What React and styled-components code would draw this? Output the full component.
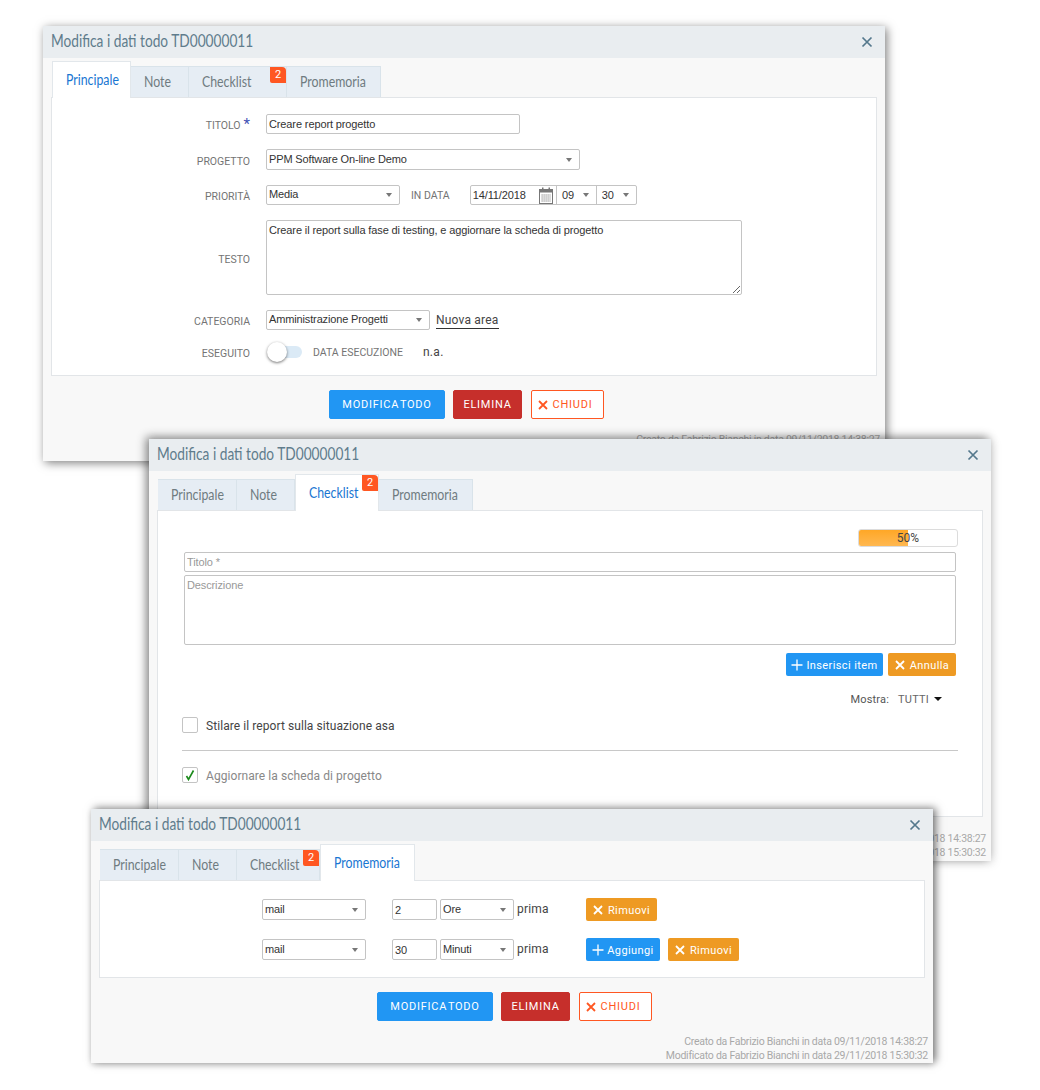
import React from "react";
import styled, { createGlobalStyle } from "styled-components";

const GlobalStyle = createGlobalStyle`
  html, body {
    margin: 0;
    background: #fff;
  }
`;

const Desktop = styled.div`
  position: relative;
  width: 1040px;
  height: 1090px;
  overflow: hidden;
  font-family: "Liberation Sans", Arial, sans-serif;
`;

const Win = styled.section`
  position: absolute;
  left: ${props => props.$x}px;
  top: ${props => props.$y}px;
  width: 842px;
  height: ${props => props.$h}px;
  background: #f8f8f8;
  box-shadow: ${props => props.$shadow};
  display: flex;
  flex-direction: column;
`;

const WinHeader = styled.header`
  height: 32px;
  flex: none;
  background: #e9edf0;
  display: flex;
  align-items: center;
  justify-content: space-between;
  padding: 0 12px 0 8px;
`;

const WinTitle = styled.h2`
  margin: 0 0 2px;
  font: 400 16.5px "Lato", sans-serif;
  color: #5f7c8c;
  white-space: nowrap;
  transform: scaleX(0.83);
  transform-origin: left center;
`;

const CloseIcon = styled.svg`
  width: 12px;
  height: 12px;
  stroke: #54788c;
  stroke-width: 1.7;
  fill: none;
`;

const WinBody = styled.div`
  padding: 3px 8px 0;
  display: flex;
  flex-direction: column;
  flex: 1;
`;

const TabBar = styled.div`
  display: flex;
  align-items: flex-end;
  height: 37px;
  padding-left: 1px;
  margin-bottom: -1px;
  position: relative;
`;

const Tab = styled.div`
  position: relative;
  box-sizing: border-box;
  width: ${props => props.$w}px;
  height: ${props => (props.$active ? 37 : 31)}px;
  margin-bottom: ${props => (props.$active ? 0 : 1)}px;
  padding: ${props => (props.$active ? "9px" : "6px")} 0 0 13px;
  font: 400 14.5px "Lato", sans-serif;
  background: ${props => (props.$active ? "#fff" : "#e6edf4")};
  color: ${props => (props.$active ? "#1976d2" : "#6f7b80")};
  border: 1px solid ${props => (props.$active ? "#e2e7eb" : "#d9e3ea")};
  border-left-width: ${props => (props.$active ? 1 : 0)}px;
  border-bottom: 0;
  z-index: ${props => (props.$active ? 1 : 0)};
`;

const TabLabel = styled.span`
  display: inline-block;
  transform: scaleX(0.85);
  transform-origin: left center;
`;

const Badge = styled.span`
  position: absolute;
  top: 0;
  right: 0;
  width: 16px;
  height: 16px;
  background: #ff5722;
  border-top-right-radius: 4px;
  border-bottom-left-radius: 2px;
  color: #fff;
  font: 400 11px/16px "Roboto", sans-serif;
  text-align: center;
`;

const Panel = styled.div`
  background: #fff;
  border: 1px solid #e2e5e8;
`;

const FormPanel = styled(Panel)`
  height: 279px;
  box-sizing: border-box;
  padding-top: 16px;
  display: grid;
  grid-template-columns: 198px 1fr;
  column-gap: 16px;
  row-gap: 15px;
  grid-auto-rows: min-content;
`;

const Label = styled.label`
  justify-self: end;
  align-self: center;
  padding-top: 3px;
  margin: ${props => props.$m || 0};
  font: 400 10.5px "Roboto", sans-serif;
  color: #747474;
  text-transform: uppercase;
  white-space: nowrap;
`;

const Star = styled.span`
  color: #3f51b5;
  font-size: 15px;
  line-height: 10px;
  margin-left: 3px;
`;

const Line = styled.div`
  display: flex;
  align-items: center;
  min-height: 20px;
`;

const ToggleLine = styled(Line)`
  margin-top: -3px;
`;

const TextField = styled.input`
  box-sizing: border-box;
  width: ${props => props.$w};
  height: ${props => props.$h || 20}px;
  padding: 0 2px;
  border: 1px solid #c4c4c4;
  border-radius: 2px;
  font: 400 11px "Liberation Sans", Arial, sans-serif;
  letter-spacing: -0.12px;
  color: #333;
  background: #fff;
  outline: 0;

  &::placeholder {
    color: #999;
    opacity: 1;
  }
`;

const TextBox = styled.textarea`
  display: block;
  box-sizing: border-box;
  width: ${props => props.$w};
  height: ${props => props.$h}px;
  padding: 3px 2px;
  margin: ${props => props.$m || 0};
  border: 1px solid #c4c4c4;
  border-radius: 2px;
  font: 400 11px "Liberation Sans", Arial, sans-serif;
  letter-spacing: -0.12px;
  color: #333;
  background: #fff;
  outline: 0;
  resize: ${props => (props.$fixed ? "none" : "both")};

  &::placeholder {
    color: #999;
    opacity: 1;
  }
`;

const SelectBox = styled.div`
  box-sizing: border-box;
  width: ${props => props.$w}px;
  height: ${props => props.$h || 20}px;
  flex: none;
  display: flex;
  align-items: center;
  justify-content: space-between;
  padding: 0 7px 2px 2px;
  border: 1px solid #c4c4c4;
  border-radius: 2px;
  background: #fff;
  font: 400 11px "Liberation Sans", Arial, sans-serif;
  letter-spacing: -0.14px;
  color: #333;

  &::after {
    content: "";
    margin-top: 2px;
    border-left: 3.5px solid transparent;
    border-right: 3.5px solid transparent;
    border-top: 4px solid #777;
  }
`;

const InlineLabel = styled.span`
  font: 400 10.5px "Roboto", sans-serif;
  color: #747474;
  text-transform: uppercase;
  margin: ${props => props.$m};
  white-space: nowrap;
`;

const DateGroup = styled.div`
  box-sizing: border-box;
  width: 167px;
  height: 20px;
  display: flex;
  border: 1px solid #c4c4c4;
  border-radius: 2px;
  font: 400 11px "Liberation Sans", Arial, sans-serif;
  letter-spacing: -0.1px;
  color: #333;
`;

const DateInput = styled.div`
  width: 86px;
  display: flex;
  align-items: center;
  justify-content: space-between;
  padding: 0 3px 0 2px;
  box-sizing: border-box;
`;

const TimePart = styled.div`
  box-sizing: border-box;
  width: 40px;
  display: flex;
  align-items: center;
  justify-content: space-between;
  padding: 0 7px 0 5px;
  border-left: 1px solid #c4c4c4;

  &::after {
    content: "";
    border-left: 3.5px solid transparent;
    border-right: 3.5px solid transparent;
    border-top: 4px solid #777;
  }
`;

const LinkText = styled.a`
  margin: 1px 0 0 6px;
  padding-bottom: 1px;
  border-bottom: 1px solid #333;
  font: 400 12px "Roboto", sans-serif;
  letter-spacing: 0.2px;
  color: #444;
`;

const Toggle = styled.div`
  position: relative;
  width: 36px;
  height: 20px;
  margin-left: 1px;
  flex: none;

  &::before {
    content: "";
    position: absolute;
    left: 10px;
    right: 1px;
    top: 4px;
    height: 12px;
    border-radius: 6px;
    background: #dbeaf6;
  }

  &::after {
    content: "";
    position: absolute;
    left: 0;
    top: 0;
    width: 20px;
    height: 20px;
    border-radius: 50%;
    background: #fff;
    box-shadow: 0 1px 3px rgba(0, 0, 0, 0.55);
  }
`;

const PlainValue = styled.span`
  font: 400 12px "Roboto", sans-serif;
  letter-spacing: 0.3px;
  color: #444;
`;

const Actions = styled.div`
  display: flex;
  justify-content: center;
  padding-left: 5px;
  margin-top: 14px;
`;

const BigButton = styled.button`
  box-sizing: border-box;
  height: 29px;
  width: ${props => props.$w}px;
  margin-left: ${props => props.$ml || 0}px;
  padding: 0 ${props => props.$pr || 0}px 0 0;
  border: 1px solid ${props => props.$border || props.$bg};
  border-radius: 2px;
  background: ${props => props.$bg};
  color: ${props => props.$color || "#fff"};
  font: 400 11px "Roboto", sans-serif;
  letter-spacing: 0.75px;
  word-spacing: -2.5px;
  display: flex;
  align-items: center;
  justify-content: center;
  gap: 3px;
`;

const SmallButton = styled.button`
  box-sizing: border-box;
  height: 23px;
  width: ${props => props.$w}px;
  margin-left: ${props => props.$ml || 0}px;
  padding: 1px 0 0;
  flex: none;
  border: 0;
  border-radius: 2px;
  background: ${props => props.$bg};
  color: #fff;
  font: 400 11px "Roboto", sans-serif;
  letter-spacing: 0.4px;
  display: flex;
  align-items: center;
  justify-content: center;
  gap: 3px;
`;

const Audit = styled.footer`
  margin: ${props => props.$mt}px -3px 0 0;
  text-align: right;
  font: 400 10.5px/14px "Roboto", sans-serif;
  letter-spacing: -0.26px;
  color: #a8a8a8;
`;

const ChecklistPanel = styled(Panel)`
  padding: 18px 26px 34px;
  height: 307px;
  box-sizing: border-box;
`;

const ProgressBar = styled.div`
  position: relative;
  box-sizing: border-box;
  width: 100px;
  height: 18px;
  margin: 0 -2px 5px auto;
  border: 1px solid #dcdcdc;
  border-radius: 3px;
  overflow: hidden;
  text-align: center;
  font: 400 12px/17px "Roboto", sans-serif;
  color: #444;
`;

const ProgressFill = styled.div`
  position: absolute;
  inset: 0 auto 0 0;
  background: linear-gradient(#ffa726, #ffb851);
`;

const ProgressText = styled.span`
  position: relative;
`;

const ItemButtons = styled.div`
  display: flex;
  justify-content: flex-end;
  margin-top: 8px;
`;

const ShowFilter = styled.div`
  display: flex;
  justify-content: flex-end;
  align-items: center;
  height: 16px;
  margin: 15px 14px 10px 0;
  font: 400 11px "Roboto", sans-serif;
  letter-spacing: 0.2px;
  color: #555;
`;

const FilterValue = styled.span`
  margin-left: 9px;
  color: #666;

  &::after {
    content: "";
    display: inline-block;
    margin: 0 0 1px 5px;
    vertical-align: middle;
    border-left: 4px solid transparent;
    border-right: 4px solid transparent;
    border-top: 4px solid #111;
  }
`;

const CheckRow = styled.div`
  display: flex;
  align-items: center;
  margin: 0 -2px;
  height: 16px;
  font: 400 12px "Roboto", sans-serif;
  letter-spacing: 0.07px;
  color: ${props => (props.$done ? "#888" : "#444")};
`;

const CheckText = styled.span`
  padding-top: 1px;
`;

const CheckBox = styled.span`
  box-sizing: border-box;
  width: 16px;
  height: 16px;
  margin-right: 8px;
  border: 1px solid #c4c4c4;
  border-radius: 2px;
  display: flex;
  align-items: center;
  justify-content: center;
`;

const Rule = styled.hr`
  margin: 17px -2px 16px;
  border: 0;
  border-top: 1px solid #c8c8c8;
`;

const ReminderPanel = styled(Panel)`
  height: 98px;
  box-sizing: border-box;
  padding: 18px 0 0 162px;
  display: flex;
  flex-direction: column;
  gap: 19px;
`;

const ReminderRow = styled.div`
  display: flex;
  align-items: center;
  height: 21px;
`;

const Prima = styled.span`
  margin: 0 37px 2px 3px;
  width: 32px;
  font: 400 12px "Roboto", sans-serif;
  letter-spacing: 0.2px;
  color: #444;
`;

const Spaced = styled.div`
  margin-left: ${props => props.$ml}px;
`;

const CrossSvg = styled.svg`
  margin-right: 2px;
`;

function CrossIcon() {
  return (
    <CrossSvg width="10" height="10" viewBox="0 0 10 10" fill="none" stroke="currentColor" strokeWidth="1.8">
      <path d="M1 1l8 8M9 1l-8 8" />
    </CrossSvg>
  );
}

function PlusIcon() {
  return (
    <svg width="12" height="12" viewBox="0 0 12 12" fill="none" stroke="currentColor" strokeWidth="1.3">
      <path d="M6 0.5v11M0.5 6h11" />
    </svg>
  );
}

function CalendarIcon() {
  return (
    <svg width="14" height="17" viewBox="0 0 14 17">
      <rect x="0.5" y="2.5" width="13" height="14" fill="#fff" stroke="#777" />
      <rect x="0" y="2" width="14" height="3.5" fill="#777" />
      <path d="M3 0.5h1.5v2H3zM9.5 0.5H11v2H9.5z" fill="#777" />
      <path d="M2.5 8h9M2.5 10h9M2.5 12h9M2.5 14h9" stroke="#777" strokeDasharray="1.2 0.8" />
    </svg>
  );
}

function Header() {
  return (
    <WinHeader>
      <WinTitle>Modifica i dati todo TD00000011</WinTitle>
      <CloseIcon viewBox="0 0 12 12">
        <path d="M1.5 1.5l9 9M10.5 1.5l-9 9" />
      </CloseIcon>
    </WinHeader>
  );
}

function Tabs({ active }) {
  // the Checklist tab is wider on the first window, the active tab gains a pixel
  const checklistWidth = active === "Principale" ? 98 : active === "Checklist" ? 84 : 83;
  const tabs = [
    { label: "Principale", w: 79 },
    { label: "Note", w: 58 },
    { label: "Checklist", w: checklistWidth, badge: 2 },
    { label: "Promemoria", w: active === "Promemoria" ? 95 : 94 }
  ];
  return (
    <TabBar>
      {tabs.map(t => (
        <Tab key={t.label} $w={t.w} $active={t.label === active}>
          <TabLabel>{t.label}</TabLabel>
          {t.badge && <Badge>{t.badge}</Badge>}
        </Tab>
      ))}
    </TabBar>
  );
}

function MainActions() {
  return (
    <Actions>
      <BigButton $w={116} $bg="#2196f3">MODIFICA TODO</BigButton>
      <BigButton $w={69} $ml={8} $bg="#c62f2b">ELIMINA</BigButton>
      <BigButton $w={73} $ml={9} $pr={5} $bg="#fff" $border="#ff5722" $color="#ff5722">
        <CrossIcon />
        CHIUDI
      </BigButton>
    </Actions>
  );
}

function AuditLines({ mt }) {
  return (
    <Audit $mt={mt}>
      Creato da Fabrizio Bianchi in data 09/11/2018 14:38:27
      <br />
      Modificato da Fabrizio Bianchi in data 29/11/2018 15:30:32
    </Audit>
  );
}

function MainWindow() {
  return (
    <Win $x={43} $y={26} $h={435} $shadow="2px 2px 9px rgba(0, 0, 0, 0.5)">
      <Header />
      <WinBody>
        <Tabs active="Principale" />
        <FormPanel>
          <Label>Titolo<Star>*</Star></Label>
          <Line><TextField $w="254px" defaultValue="Creare report progetto" /></Line>

          <Label>Progetto</Label>
          <Line><SelectBox $w={314} $h={21}>PPM Software On-line Demo</SelectBox></Line>

          <Label>Priorità</Label>
          <Line>
            <SelectBox $w={134}>Media</SelectBox>
            <InlineLabel $m="0 20px 0 11px">In data</InlineLabel>
            <DateGroup>
              <DateInput>14/11/2018<CalendarIcon /></DateInput>
              <TimePart>09</TimePart>
              <TimePart>30</TimePart>
            </DateGroup>
          </Line>

          <Label>Testo</Label>
          <TextBox $w="476px" $h={75} defaultValue="Creare il report sulla fase di testing, e aggiornare la scheda di progetto" />

          <Label>Categoria</Label>
          <Line>
            <SelectBox $w={164}>Amministrazione Progetti</SelectBox>
            <LinkText>Nuova area</LinkText>
          </Line>

          <Label as="span" $m="-3px 0 0">Eseguito</Label>
          <ToggleLine>
            <Toggle />
            <InlineLabel $m="0 20px 0 10px">Data esecuzione</InlineLabel>
            <PlainValue>n.a.</PlainValue>
          </ToggleLine>
        </FormPanel>
        <MainActions />
        <AuditLines mt={14} />
      </WinBody>
    </Win>
  );
}

function ChecklistWindow() {
  return (
    <Win $x={149} $y={439} $h={422} $shadow="-3px -2px 9px rgba(0, 0, 0, 0.45), 2px 2px 10px rgba(0, 0, 0, 0.1)">
      <Header />
      <WinBody>
        <Tabs active="Checklist" />
        <ChecklistPanel>
          <ProgressBar>
            <ProgressFill style={{ width: "50%" }} />
            <ProgressText>50%</ProgressText>
          </ProgressBar>
          <TextField $w="100%" placeholder="Titolo *" />
          <TextBox $w="100%" $h={70} $m="3px 0 0" $fixed placeholder="Descrizione" />
          <ItemButtons>
            <SmallButton $w={97} $bg="#2196f3"><PlusIcon />Inserisci item</SmallButton>
            <SmallButton $w={68} $ml={5} $bg="#ee9a23"><CrossIcon />Annulla</SmallButton>
          </ItemButtons>
          <ShowFilter>Mostra:<FilterValue>TUTTI</FilterValue></ShowFilter>
          <CheckRow>
            <CheckBox />
            <CheckText>Stilare il report sulla situazione asa</CheckText>
          </CheckRow>
          <Rule />
          <CheckRow $done>
            <CheckBox>
              <svg width="12" height="12" viewBox="0 0 12 12" fill="none" stroke="#1b8a1b" strokeWidth="1.6">
                <path d="M2.5 7l2 3.5 5-9" />
              </svg>
            </CheckBox>
            <CheckText>Aggiornare la scheda di progetto</CheckText>
          </CheckRow>
        </ChecklistPanel>
        <AuditLines mt={15} />
      </WinBody>
    </Win>
  );
}

function ReminderWindow() {
  return (
    <Win $x={91} $y={809} $h={254} $shadow="3px -1px 8px rgba(0, 0, 0, 0.5), 0 3px 6px rgba(0, 0, 0, 0.1)">
      <Header />
      <WinBody>
        <Tabs active="Promemoria" />
        <ReminderPanel>
          <ReminderRow>
            <SelectBox $w={104} $h={21}>mail</SelectBox>
            <Spaced $ml={26}><TextField $w="45px" $h={21} defaultValue="2" /></Spaced>
            <Spaced $ml={3}><SelectBox $w={74} $h={21}>Ore</SelectBox></Spaced>
            <Prima>prima</Prima>
            <SmallButton $w={71} $bg="#ee9a23"><CrossIcon />Rimuovi</SmallButton>
          </ReminderRow>
          <ReminderRow>
            <SelectBox $w={104} $h={21}>mail</SelectBox>
            <Spaced $ml={26}><TextField $w="45px" $h={21} defaultValue="30" /></Spaced>
            <Spaced $ml={3}><SelectBox $w={74} $h={21}>Minuti</SelectBox></Spaced>
            <Prima>prima</Prima>
            <SmallButton $w={74} $bg="#2196f3"><PlusIcon />Aggiungi</SmallButton>
            <SmallButton $w={71} $ml={8} $bg="#ee9a23"><CrossIcon />Rimuovi</SmallButton>
          </ReminderRow>
        </ReminderPanel>
        <MainActions />
        <AuditLines mt={14} />
      </WinBody>
    </Win>
  );
}

export default function App() {
  return (
    <Desktop>
      <GlobalStyle />
      <MainWindow />
      <ChecklistWindow />
      <ReminderWindow />
    </Desktop>
  );
}
